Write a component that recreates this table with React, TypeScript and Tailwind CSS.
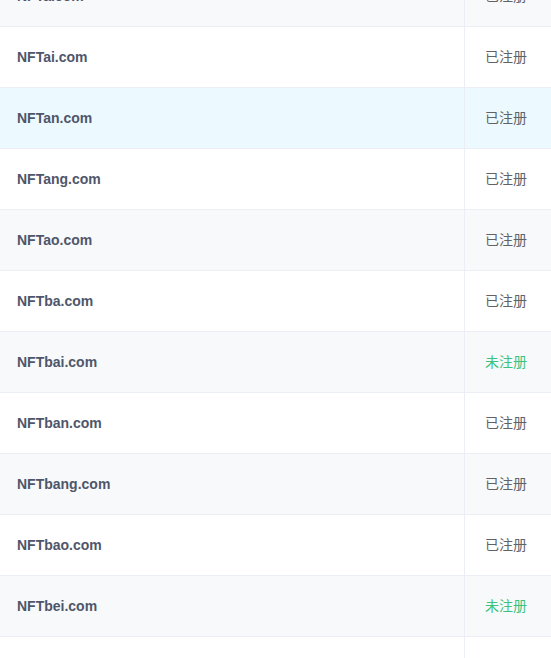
import React from 'react';

const rows: { name: string; registered: boolean }[] = [
  { name: 'NFTa.com', registered: true },
  { name: 'NFTai.com', registered: true },
  { name: 'NFTan.com', registered: true },
  { name: 'NFTang.com', registered: true },
  { name: 'NFTao.com', registered: true },
  { name: 'NFTba.com', registered: true },
  { name: 'NFTbai.com', registered: false },
  { name: 'NFTban.com', registered: true },
  { name: 'NFTbang.com', registered: true },
  { name: 'NFTbao.com', registered: true },
  { name: 'NFTbei.com', registered: false },
  { name: 'NFTben.com', registered: true },
];

export default function App() {
  return (
    <div className="h-[658px] w-[551px] overflow-hidden bg-white">
      <div className="-mt-[34px]">
        {rows.map((row, i) => {
          // row 2 is under the mouse in the screenshot
          const bg = i === 2 ? 'bg-[#ecfaff]' : i % 2 === 0 ? 'bg-[#f8f9fb]' : 'bg-white';
          return (
            <div key={row.name} className={`flex h-[61px] border-b border-[#ebeef5] ${bg}`}>
              <div className="flex flex-1 items-center border-r border-[#ebeef5] pl-[17px] font-['Liberation_Sans',Arial,sans-serif] text-[14px] font-bold text-[#4f566a]">
                {row.name}
              </div>
              <div
                className={`flex w-[86px] items-center pb-[2px] pl-[20px] font-['Noto_Sans_CJK_SC',sans-serif] text-[14px] ${
                  row.registered ? 'text-[#606266]' : 'text-[#3cc27d]'
                }`}
              >
                {row.registered ? '已注册' : '未注册'}
              </div>
            </div>
          );
        })}
      </div>
    </div>
  );
}
